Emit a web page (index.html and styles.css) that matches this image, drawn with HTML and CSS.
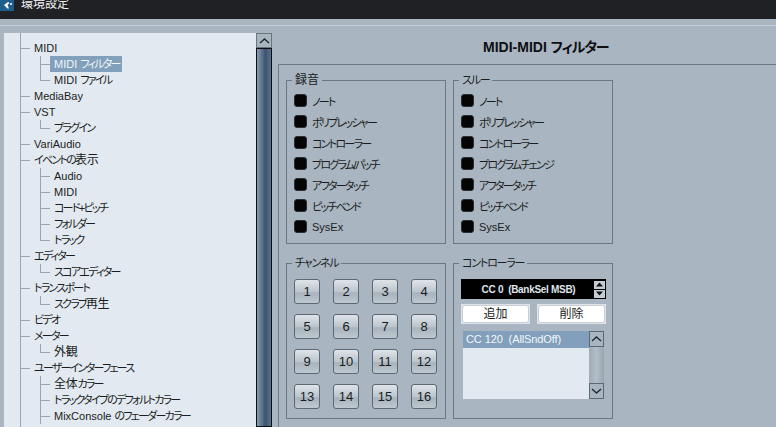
FILE: index.html
```html
<!DOCTYPE html>
<html lang="ja">
<head>
<meta charset="utf-8">
<title>環境設定</title>
<link rel="stylesheet" href="styles.css">
</head>
<body>
<header class="titlebar">
  <span class="logo"><svg width="14" height="11" viewBox="0 0 14 11"><path d="M4 5 L8 2 L9.5 3 L7.5 5 L9 8.5 L7.5 8.5 Z" fill="#fff"/><circle cx="11" cy="4" r="1" fill="#fff"/></svg></span>
  <span class="title">環境設定</span>
</header>
<div class="rule"></div>
<main class="main">
  <nav class="treewrap">
    <div class="tree">
      <div class="row l1">MIDI</div>
      <div class="row l2"><span class="sel">MIDI <span class="k">フィルター</span></span></div>
      <div class="row l2 last">MIDI <span class="k">ファイル</span></div>
      <div class="row l1">MediaBay</div>
      <div class="row l1">VST</div>
      <div class="row l2 last k">プラグイン</div>
      <div class="row l1">VariAudio</div>
      <div class="row l1 k">イベントの<span class="kanji">表示</span></div>
      <div class="row l2">Audio</div>
      <div class="row l2">MIDI</div>
      <div class="row l2 k">コード+ピッチ</div>
      <div class="row l2 k">フォルダー</div>
      <div class="row l2 last k">トラック</div>
      <div class="row l1 k">エディター</div>
      <div class="row l2 last k">スコアエディター</div>
      <div class="row l1 k">トランスポート</div>
      <div class="row l2 last k">スクラブ<span class="kanji">再生</span></div>
      <div class="row l1 k">ビデオ</div>
      <div class="row l1 k">メーター</div>
      <div class="row l2 last"><span class="kanji">外観</span></div>
      <div class="row l1 k">ユーザーインターフェース</div>
      <div class="row l2 k"><span class="kanji">全体</span>カラー</div>
      <div class="row l2 k">トラックタイプのデフォルトカラー</div>
      <div class="row l2">MixConsole <span class="k">のフェーダーカラー</span></div>
    </div>
    <div class="vscroll">
      <div class="arrow"><svg width="11" height="6" viewBox="0 0 11 6"><path d="M1 5 L5.5 1 L10 5" fill="none" stroke="#1c2a38" stroke-width="1.4"/></svg></div>
      <div class="thumb"></div>
    </div>
  </nav>
  <section class="content">
    <h1 class="heading">MIDI-MIDI <span class="k">フィルター</span></h1>
    <div class="groups">
      <fieldset class="group check-group">
        <legend>録音</legend>
        <label class="check k"><i></i>ノート</label>
        <label class="check k"><i></i>ポリプレッシャー</label>
        <label class="check k"><i></i>コントローラー</label>
        <label class="check k"><i></i>プログラム/パッチ</label>
        <label class="check k"><i></i>アフタータッチ</label>
        <label class="check k"><i></i>ピッチベンド</label>
        <label class="check"><i></i>SysEx</label>
      </fieldset>
      <fieldset class="group check-group">
        <legend class="k">スルー</legend>
        <label class="check k"><i></i>ノート</label>
        <label class="check k"><i></i>ポリプレッシャー</label>
        <label class="check k"><i></i>コントローラー</label>
        <label class="check k"><i></i>プログラムチェンジ</label>
        <label class="check k"><i></i>アフタータッチ</label>
        <label class="check k"><i></i>ピッチベンド</label>
        <label class="check"><i></i>SysEx</label>
      </fieldset>
      <fieldset class="group channels">
        <legend class="k">チャンネル</legend>
        <div class="grid">
          <button>1</button><button>2</button><button>3</button><button>4</button>
          <button>5</button><button>6</button><button>7</button><button>8</button>
          <button>9</button><button>10</button><button>11</button><button>12</button>
          <button>13</button><button>14</button><button>15</button><button>16</button>
        </div>
      </fieldset>
      <fieldset class="group ctrl">
        <legend class="k">コントローラー</legend>
        <div class="spin">
          <span class="spintext">CC 0&nbsp; (BankSel MSB)</span>
          <span class="spinbtns">
            <b><svg width="7" height="5" viewBox="0 0 7 5"><path d="M3.5 0.5 L7 4.5 H0 Z" fill="#111"/></svg></b>
            <b><svg width="7" height="5" viewBox="0 0 7 5"><path d="M3.5 4.5 L7 0.5 H0 Z" fill="#111"/></svg></b>
          </span>
        </div>
        <div class="actions">
          <span class="act"><span>追加</span></span>
          <span class="act"><span>削除</span></span>
        </div>
        <div class="list">
          <div class="items"><div class="item">CC 120&nbsp; (AllSndOff)</div></div>
          <div class="lscroll">
            <div class="larrow"><svg width="11" height="6" viewBox="0 0 11 6"><path d="M1 5 L5.5 1 L10 5" fill="none" stroke="#1c2a38" stroke-width="1.4"/></svg></div>
            <div class="ltrack"></div>
            <div class="larrow"><svg width="11" height="6" viewBox="0 0 11 6"><path d="M1 1 L5.5 5 L10 1" fill="none" stroke="#1c2a38" stroke-width="1.4"/></svg></div>
          </div>
        </div>
      </fieldset>
    </div>
  </section>
</main>
</body>
</html>
```
FILE: styles.css
```css
html, body { margin: 0; height: 427px; overflow: hidden; }
body { background: #a9b5c0; font-family: "Liberation Sans", "Noto Sans CJK JP", sans-serif; font-size: 11px; font-feature-settings: "palt"; color: #1a1d20; }
.k { font-size: 11px; letter-spacing: -1.75px; }
.kanji { font-size: 12px; letter-spacing: -0.3px; }
.titlebar { height: 19px; background: #1f2125; display: flex; align-items: flex-start; gap: 7px; overflow: hidden; }
.logo { width: 14px; height: 11px; background: #1d5f8a; display: flex; flex: none; }
.title { color: #f0f0f0; font-size: 12px; line-height: 19px; margin-top: -5px; }
.rule { height: 1px; margin-top: 6px; background: #c3ced8; }
.main { display: flex; height: 401px; padding: 7px 0 0 4px; box-sizing: border-box; }
.treewrap { display: flex; width: 269px; flex: none; }
.tree { width: 252px; background: #e3e9f1 linear-gradient(#9aa5b0, #9aa5b0) 16px 0 / 1px 100% no-repeat; padding-top: 7px; box-sizing: border-box; overflow: hidden; }
.row { height: 16px; line-height: 16px; position: relative; white-space: nowrap; }
.l1 { padding-left: 30px; }
.l2 { padding-left: 50px; }
.l1::before { content: ""; position: absolute; left: 16px; top: 8px; width: 10px; height: 1px; background: #9aa5b0; }
.l2::before { content: ""; position: absolute; left: 36px; top: 8px; width: 10px; height: 1px; background: #9aa5b0; }
.l2::after { content: ""; position: absolute; left: 36px; top: 0; width: 1px; height: 16px; background: #9aa5b0; }
.l2.last::after { height: 8px; }
.sel { display: inline-block; width: 72px; box-sizing: border-box; background: #829fbb; color: #f4f7fa; margin-left: -4px; padding-left: 4px; height: 16px; }
.vscroll { width: 16px; display: flex; flex-direction: column; }
.arrow { height: 15px; background: #aab5c0; border: 1px solid #69747f; box-sizing: border-box; display: flex; align-items: center; justify-content: center; }
.thumb { flex: 1; border: 1px solid #0b0e12; background: linear-gradient(90deg, #8a9cb0, #3b5470 60%, #5c7288); }
.content { flex: 1; display: flex; flex-direction: column; min-width: 0; padding-left: 5px; }
.heading { margin: 0; padding: 7px 0 0 205px; height: 24px; font-size: 14px; line-height: 15px; font-weight: 700; color: #0d0f12; }
.heading .k { font-size: 14px; letter-spacing: -1.1px; }
.groups { flex: 1; display: grid; grid-template-columns: 160px 160px; grid-template-rows: 171px 163px; column-gap: 7px; row-gap: 12px; padding: 8px 0 0 7px; align-content: start; border-top: 1px solid #6e7b87; border-left: 1px solid #6e7b87; }
.group { margin: 0; padding: 0; border: 1px solid #6c7985; min-width: 0; box-sizing: border-box; }
.group legend { padding: 0 3px; margin-left: -2px; line-height: 14px; font-size: 12px; }
.group legend.k { font-size: 11px; letter-spacing: -1.2px; }
.check-group { padding: 3px 0 0 7px; }
.check { display: flex; align-items: center; gap: 5px; height: 21px; white-space: nowrap; }
.check i { width: 13px; height: 13px; background: #050505; border-radius: 3px; border: 1px solid #2a2e33; box-sizing: border-box; flex: none; }
.channels { padding: 9px 0 0 7px; }
.grid { display: grid; grid-template-columns: repeat(4, 26px); grid-auto-rows: 25px; column-gap: 13px; row-gap: 10px; }
.grid button { padding: 0; margin: 0; border: 1px solid #5c6873; border-radius: 3px; background: linear-gradient(#dfe4e9, #bcc5cd 50%, #a8b3bd 56%, #bfc8d0); color: #1a1d20; font: 13px "Liberation Sans", sans-serif; }
.ctrl { padding: 9px 6px 0 7px; }
.spin { height: 20px; background: #000; display: flex; align-items: center; }
.spintext { flex: 1; text-align: center; color: #dfe4e9; font: 700 10px "Liberation Sans", sans-serif; letter-spacing: -0.3px; padding-left: 2px; }
.spinbtns { width: 11px; display: flex; flex-direction: column; gap: 1px; margin-right: 1px; }
.spinbtns b { height: 8px; background: #c4ccd4; display: flex; align-items: center; justify-content: center; }
.actions { display: flex; justify-content: space-between; margin-top: 5px; }
.act { width: 69px; height: 20px; background: #dde3e9; padding: 1px; box-sizing: border-box; display: flex; }
.act span { flex: 1; background: #fff; border: 1px solid #c9cfd6; border-radius: 3px; text-align: center; font-size: 12px; line-height: 16px; }
.list { display: flex; height: 68px; margin: 7px 0 0 2px; width: 141px; }
.items { flex: 1; background: #e3e9f1; }
.item { height: 17px; background: #829fbb; color: #f4f7fa; padding-left: 3px; font: 11px/17px "Liberation Sans", sans-serif; letter-spacing: -0.1px; white-space: nowrap; }
.lscroll { width: 15px; display: flex; flex-direction: column; }
.larrow { height: 16px; background: #aab5c0; border: 1px solid #5c6873; box-sizing: border-box; display: flex; align-items: center; justify-content: center; }
.ltrack { flex: 1; background: linear-gradient(90deg, #a0abb6, #b4bec8, #9aa5b0); }
```
